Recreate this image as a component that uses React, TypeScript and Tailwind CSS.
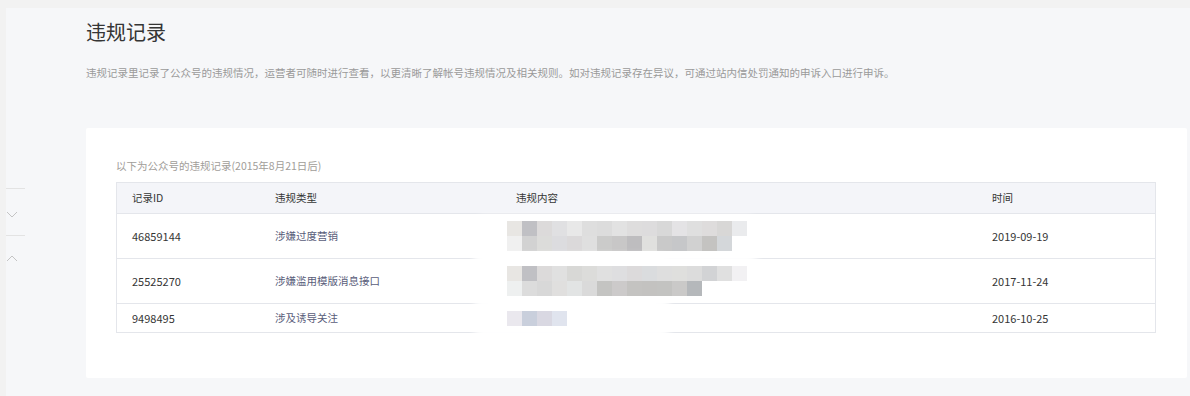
const font = { fontFamily: '"Noto Sans CJK SC", "Noto Sans", sans-serif' };

type Rec = {
  id: string;
  type: string;
  date: string;
  lines: string[][];
  h: string;
  halo: string;
};

const records: Rec[] = [
  {
    id: '46859144',
    type: '涉嫌过度营销',
    date: '2019-09-19',
    h: 'h-[45px]',
    halo: 'left-[-28px] w-[288px] top-[2px] bottom-[-5px]',
    lines: [
      ['bg-[#e8e6e3]', 'bg-[#c0c0c4]', 'bg-[#dcdada]', 'bg-[#e0e0e2]', 'bg-[#e8e8e8]', 'bg-[#dedede]', 'bg-[#dcdcdc]', 'bg-[#e2e2e2]', 'bg-[#dedddd]', 'bg-[#dddcdd]', 'bg-[#d8d8d8]', 'bg-[#e4e3e5]', 'bg-[#dfdfdf]', 'bg-[#dedcdc]', 'bg-[#d8d7d6]', 'bg-[#eaebed]'],
      ['bg-[#f0f0f0]', 'bg-[#d2d2d2]', 'bg-[#dcdcda]', 'bg-[#dcdcdf]', 'bg-[#dbd9da]', 'bg-[#dfdfdf]', 'bg-[#cbcbca]', 'bg-[#c8c7c7]', 'bg-[#bebdbf]', 'bg-[#e0e0de]', 'bg-[#c9c9c9]', 'bg-[#c6c7c9]', 'bg-[#d1d1d1]', 'bg-[#c4c3c1]', 'bg-[#d4d7da]'],
    ],
  },
  {
    id: '25525270',
    type: '涉嫌滥用模版消息接口',
    date: '2017-11-24',
    h: 'h-[45px]',
    halo: 'left-[-28px] w-[200px] top-[-4px] bottom-[-5px]',
    lines: [
      ['bg-[#e8e6e3]', 'bg-[#c0c0c4]', 'bg-[#dcdada]', 'bg-[#e0e0e0]', 'bg-[#d8d8d6]', 'bg-[#dcdcda]', 'bg-[#e0e0e0]', 'bg-[#dedee0]', 'bg-[#dcdadb]', 'bg-[#dadcde]', 'bg-[#dedede]', 'bg-[#dfdfdd]', 'bg-[#dcdcdc]', 'bg-[#d2d3d5]', 'bg-[#e0e0e0]', 'bg-[#f2f1f3]'],
      ['bg-[#eef0f0]', 'bg-[#dcdcdc]', 'bg-[#d8d8d8]', 'bg-[#e0dfde]', 'bg-[#e2e4e4]', 'bg-[#dadada]', 'bg-[#c4c4c2]', 'bg-[#cccaca]', 'bg-[#c4c3c1]', 'bg-[#c3c2c0]', 'bg-[#c3c3c1]', 'bg-[#cac9c8]', 'bg-[#b5b8bb]'],
    ],
  },
  {
    id: '9498495',
    type: '涉及诱导关注',
    date: '2016-10-25',
    h: 'h-[28px]',
    halo: 'left-[-28px] w-[200px] top-[-2px] bottom-[-6px]',
    lines: [['bg-[#eae8ee]', 'bg-[#c9cfdc]', 'bg-[#d9d8e2]', 'bg-[#e0e4ee]']],
  },
];

const cols = 'grid grid-cols-[142px_241px_476px_1fr]';

function Chevron({ up }: { up?: boolean }) {
  return (
    <svg width="12" height="7" viewBox="0 0 12 7" className="ml-[6px]">
      <polyline
        points={up ? '1,6 6,1 11,6' : '1,1 6,6 11,1'}
        fill="none"
        stroke="#c4c4c4"
        strokeWidth="1"
      />
    </svg>
  );
}

export default function App() {
  return (
    <div className="w-[1190px] h-[396px] overflow-hidden bg-[#f2f2f2] flex" style={font}>
      <div className="w-[6px] shrink-0" />
      <div className="flex-1 mt-[8px] bg-[#f6f7f9] flex">
        {/* side controls */}
        <div className="w-[80px] shrink-0 pt-[180px]">
          <div className="w-[19px] h-px bg-[#e3e3e3]" />
          <div className="h-[46px] flex items-center -ml-[6px] pt-[4px]">
            <Chevron />
          </div>
          <div className="w-[19px] h-px bg-[#e3e3e3]" />
          <div className="h-[46px] flex items-center -ml-[6px] pb-[2px]">
            <Chevron up />
          </div>
        </div>

        <div className="flex-1 pr-[3px]">
          <h1 className="text-[20px] leading-[28px] text-[#353535] font-normal mt-[10px]">违规记录</h1>
          <p className="text-[10.5px] leading-[16px] text-[#9a9a9a] mt-[19px]">
            违规记录里记录了公众号的违规情况，运营者可随时进行查看，以更清晰了解帐号违规情况及相关规则。如对违规记录存在异议，可通过站内信处罚通知的申诉入口进行申诉。
          </p>

          <div className="mt-[47px] bg-white rounded-[2px] pt-[30px] pl-[30px] pr-[31px] h-[250px]">
            <p className="text-[10.5px] leading-[16px] text-[#a19d99]">以下为公众号的违规记录(2015年8月21日后)</p>
            <div className="mt-[8px] border border-[#e4e6eb] text-[10.5px] text-[#353535]">
              <div className={`${cols} h-[31px] items-center bg-[#f4f5f9] border-b border-[#e4e6eb]`}>
                <div className="pl-[15px]">记录ID</div>
                <div className="pl-[16px]">违规类型</div>
                <div className="pl-[16px]">违规内容</div>
                <div className="pl-[16px]">时间</div>
              </div>
              {records.map((r, i) => (
                <div
                  key={r.id}
                  className={`${cols} ${r.h} items-center ${i < records.length - 1 ? 'border-b border-[#e4e6eb]' : ''}`}
                >
                  <div className="pl-[15px] text-[11px]">{r.id}</div>
                  <div className="pl-[16px] text-[#595d7a]">{r.type}</div>
                  <div className="relative self-stretch flex items-center pl-[7px]">
                    <div className={`absolute bg-white blur-[3px] rounded-[14px] ${r.halo}`} />
                    <div className="relative flex flex-col">
                      {r.lines.map((line, j) => (
                        <div key={j} className="flex">
                          {line.map((c, k) => (
                            <div key={k} className={`w-[15px] h-[15px] ${c}`} />
                          ))}
                        </div>
                      ))}
                    </div>
                  </div>
                  <div className="pl-[16px] text-[11px]">{r.date}</div>
                </div>
              ))}
            </div>
          </div>
        </div>
      </div>
    </div>
  );
}
